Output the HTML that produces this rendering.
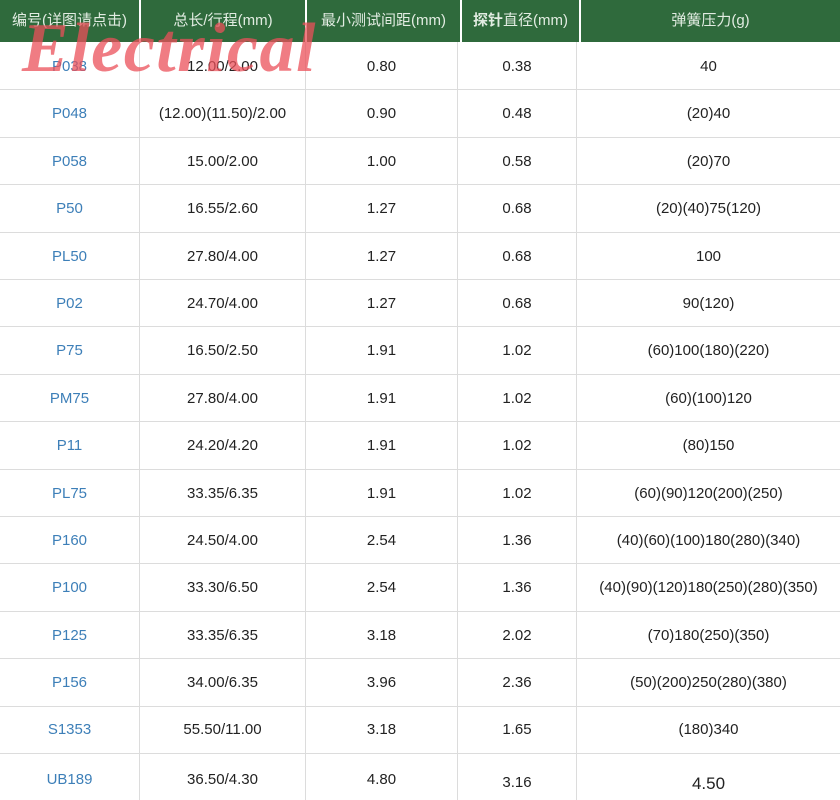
<!DOCTYPE html>
<html><head><meta charset="utf-8"><style>
body{margin:0;width:840px;height:800px;background:#fff;overflow:hidden;position:relative;font-family:"Liberation Sans","Noto Sans CJK SC",sans-serif;}
.h{position:absolute;top:0;height:42px;background:#2f6a3c;color:#e2ece2;font-size:15px;line-height:42px;text-align:center;}
.c{position:absolute;font-size:15px;color:#222;text-align:center;}
.b{color:#3d7fb8}
.vl{position:absolute;top:42px;bottom:0;width:1px;background:#dcdcdc}
.hl{position:absolute;left:0;right:0;height:1px;background:#dcdcdc}
.wm{position:absolute;left:22px;top:9px;font-family:"Liberation Serif",serif;font-style:italic;font-weight:bold;font-size:70px;color:rgba(235,80,90,0.75);letter-spacing:1.5px}
</style></head><body>
<div class="h" style="left:0;width:139px">编号(详图请点击)</div>
<div class="h" style="left:141px;width:164px">总长/行程(mm)</div>
<div class="h" style="left:307px;width:153px">最小测试间距(mm)</div>
<div class="h" style="left:462px;width:117px"><b>探针</b>直径(mm)</div>
<div class="h" style="left:581px;width:259px">弹簧压力(g)</div>
<div class="vl" style="left:139px"></div><div class="vl" style="left:305px"></div><div class="vl" style="left:457px"></div><div class="vl" style="left:576px"></div>
<div id="rows"></div>
<script>
var d=[["P038","12.00/2.00","0.80","0.38","40"],["P048","(12.00)(11.50)/2.00","0.90","0.48","(20)40"],["P058","15.00/2.00","1.00","0.58","(20)70"],["P50","16.55/2.60","1.27","0.68","(20)(40)75(120)"],["PL50","27.80/4.00","1.27","0.68","100"],["P02","24.70/4.00","1.27","0.68","90(120)"],["P75","16.50/2.50","1.91","1.02","(60)100(180)(220)"],["PM75","27.80/4.00","1.91","1.02","(60)(100)120"],["P11","24.20/4.20","1.91","1.02","(80)150"],["PL75","33.35/6.35","1.91","1.02","(60)(90)120(200)(250)"],["P160","24.50/4.00","2.54","1.36","(40)(60)(100)180(280)(340)"],["P100","33.30/6.50","2.54","1.36","(40)(90)(120)180(250)(280)(350)"],["P125","33.35/6.35","3.18","2.02","(70)180(250)(350)"],["P156","34.00/6.35","3.96","2.36","(50)(200)250(280)(380)"],["S1353","55.50/11.00","3.18","1.65","(180)340"],["UB189","36.50/4.30","4.80","3.16","4.50"]];
var cx=[[0,139],[140,165],[306,151],[458,118],[577,263]];
var h="";
for(var i=0;i<d.length;i++){var y=42+i*47.4;var cy=y+23;
if(i==15)cy=778;if(i==14)cy=728;
if(i>0)h+='<div class="hl" style="top:'+Math.round(y)+'px"></div>';
for(var j=0;j<5;j++){var t=cy;if(i==15&&j>=3)t=781;var fs=(i==15&&j==4)?17:15;
h+='<div class="c'+(j==0?' b':'')+'" style="left:'+cx[j][0]+'px;width:'+cx[j][1]+'px;top:'+(t-7)+'px;font-size:'+fs+'px">'+d[i][j]+'</div>';}}
document.getElementById('rows').innerHTML=h;
</script>
<div class="wm">Electrical</div>
</body></html>
